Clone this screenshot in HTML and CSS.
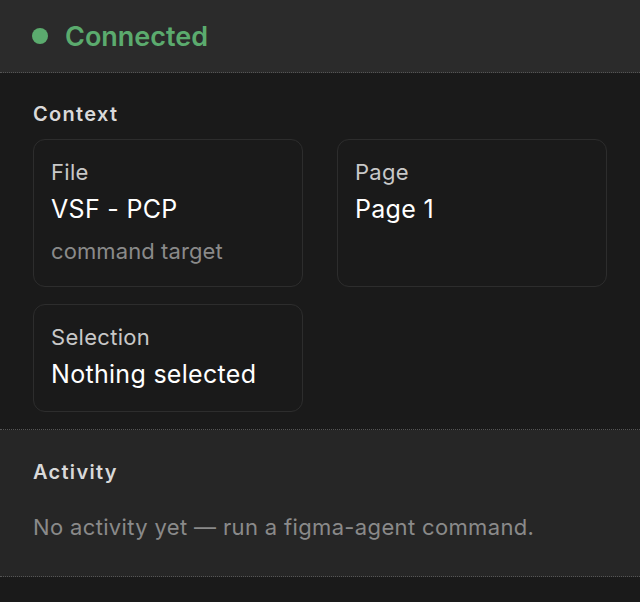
FILE: index.html
```html
<!DOCTYPE html>
<html lang="en">
  <head>
    <meta charset="UTF-8" />
    <meta name="viewport" content="width=device-width, initial-scale=1.0" />
    <title>figma-agent</title>
    <link rel="stylesheet" href="styles.css">
  </head>
  <body>
    <header class="status">
      <span class="status-dot"></span>
      <span class="status-text">Connected</span>
    </header>

    <section class="context">
      <h2 class="section-title">Context</h2>
      <div class="context-grid">
        <div class="info-card">
          <div class="info-label">File</div>
          <div class="info-value">VSF - PCP</div>
          <div class="info-note">command target</div>
        </div>
        <div class="info-card">
          <div class="info-label">Page</div>
          <div class="info-value">Page 1</div>
        </div>
        <div class="info-card">
          <div class="info-label">Selection</div>
          <div class="info-value">Nothing selected</div>
        </div>
      </div>
    </section>

    <section class="activity">
      <h2 class="section-title">Activity</h2>
      <p class="activity-empty">No activity yet — run a figma-agent command.</p>
    </section>
  </body>
</html>
```

FILE: styles.css
```css
body {
  margin: 0;
  background-color: #1a1a1a;
  font-family: Inter, 'Noto Sans', sans-serif;
  color: #fff;
}
/* Connection status */
.status {
  display: flex;
  align-items: center;
  gap: 17px;
  height: 72px;
  padding: 0 32px;
  background-color: #2b2b2b;
  border-bottom: 1px dotted #555;
}
.status-dot {
  width: 16px;
  height: 16px;
  border-radius: 50%;
  background-color: #5bab6e;
}
.status-text {
  font-size: 27px;
  font-weight: 600;
  color: #5bab6e;
}
.section-title {
  margin: 0;
  font-size: 20px;
  line-height: 24px;
  font-weight: 600;
  letter-spacing: 1.3px;
  color: #d9d9d9;
}
/* Context cards */
.context {
  padding: 29px 33px 17px;
  border-bottom: 1px dotted #555;
}
.context .section-title {
  margin-bottom: 13px;
}
.context-grid {
  display: grid;
  grid-template-columns: 1fr 1fr;
  column-gap: 34px;
  row-gap: 17px;
}
.info-card {
  padding: 19px 17px 22px;
  border: 1px solid #2d2d2d;
  border-radius: 12px;
}
.info-label {
  font-size: 22px;
  line-height: 26px;
  letter-spacing: 0.3px;
  color: #c8c8c8;
}
.info-value {
  margin-top: 9px;
  font-size: 25px;
  line-height: 30px;
  letter-spacing: 0.3px;
  color: #fff;
}
.info-note {
  margin-top: 14px;
  font-size: 22px;
  line-height: 26px;
  letter-spacing: 0.1px;
  color: #8a8a8a;
}
/* Activity */
.activity {
  padding: 30px 33px 36px;
  background-color: #262626;
  border-bottom: 1px dotted #555;
}
.activity-empty {
  margin: 30px 0 0;
  font-size: 22px;
  line-height: 26px;
  letter-spacing: 0.35px;
  color: #8a8a8a;
}
```
